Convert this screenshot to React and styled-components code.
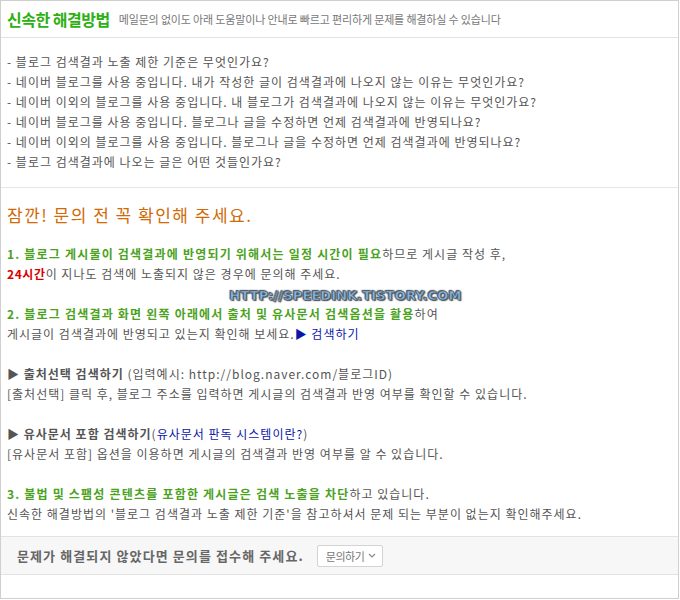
import React from 'react'
import styled, { createGlobalStyle } from 'styled-components';

const GlobalStyle = createGlobalStyle`
    body{
        margin: 0;
        background: #fff;
        font-family: "Noto Sans CJK KR", "Noto Sans", sans-serif;
    }
`;

const faqs = [
    "블로그 검색결과 노출 제한 기준은 무엇인가요?",
    "네이버 블로그를 사용 중입니다. 내가 작성한 글이 검색결과에 나오지 않는 이유는 무엇인가요?",
    "네이버 이외의 블로그를 사용 중입니다. 내 블로그가 검색결과에 나오지 않는 이유는 무엇인가요?",
    "네이버 블로그를 사용 중입니다. 블로그나 글을 수정하면 언제 검색결과에 반영되나요?",
    "네이버 이외의 블로그를 사용 중입니다. 블로그나 글을 수정하면 언제 검색결과에 반영되나요?",
    "블로그 검색결과에 나오는 글은 어떤 것들인가요?",
];

function App() {
  return (
    <>
        <GlobalStyle />
        <Page>
            <Header>
                <Title>신속한 해결방법</Title>
                <Subtitle>메일문의 없이도 아래 도움말이나 안내로 빠르고 편리하게 문제를 해결하실 수 있습니다</Subtitle>
            </Header>
            <FaqList>
                {faqs.map((q,index)=>(
                    <li key={index}>- {q}</li>
                ))}
            </FaqList>
            <Main>
                <Notice>잠깐! 문의 전 꼭 확인해 주세요.</Notice>
                <Para $tight>
                    <Green>1. 블로그 게시물이 검색결과에 반영되기 위해서는 일정 시간이 필요</Green>하므로 게시글 작성 후,<br/>
                    <Red>24시간</Red>이 지나도 검색에 노출되지 않은 경우에 문의해 주세요.
                </Para>
                <Watermark>HTTP://SPEEDINK.TISTORY.COM</Watermark>
                <Para>
                    <Green>2. 블로그 검색결과 화면 왼쪽 아래에서 출처 및 유사문서 검색옵션을 활용</Green>하여<br/>
                    게시글이 검색결과에 반영되고 있는지 확인해 보세요.<Link>▶ 검색하기</Link>
                </Para>
                <Para>
                    <Strong>▶ 출처선택 검색하기</Strong> (입력예시: http://blog.naver.com/블로그ID)<br/>
                    [출처선택] 클릭 후, 블로그 주소를 입력하면 게시글의 검색결과 반영 여부를 확인할 수 있습니다.
                </Para>
                <Para>
                    <Strong>▶ 유사문서 포함 검색하기</Strong>(<Link>유사문서 판독 시스템이란?</Link>)<br/>
                    [유사문서 포함] 옵션을 이용하면 게시글의 검색결과 반영 여부를 알 수 있습니다.
                </Para>
                <Para $last>
                    <Green>3. 불법 및 스팸성 콘텐츠를 포함한 게시글은 검색 노출을 차단</Green>하고 있습니다.<br/>
                    신속한 해결방법의 '블로그 검색결과 노출 제한 기준'을 참고하셔서 문제 되는 부분이 없는지 확인해주세요.
                </Para>
            </Main>
            <Footer>
                <FooterText>문제가 해결되지 않았다면 문의를 접수해 주세요.</FooterText>
                <AskButton>
                    문의하기
                    <svg width="8" height="5" viewBox="0 0 8 5">
                        <path d="M1 1l3 3 3-3" fill="none" stroke="#888" strokeWidth="1.1"/>
                    </svg>
                </AskButton>
            </Footer>
        </Page>
    </>
  )
}

const Page = styled.div`
    box-sizing: border-box;
    width: 679px;
    height: 599px;
    border: 1px solid #cfcfcf;
    display: flex;
    flex-direction: column;
    color: #555;
`;

const Header = styled.div`
    height: 36px;
    border-bottom: 1px solid #e2e2e2;
    display: flex;
    align-items: center;
    gap: 9px;
    padding-left: 6px;
`;

const Title = styled.h2`
    margin: 0;
    font-size: 16px;
    font-weight: 700;
    color: #2cb012;
    letter-spacing: -0.5px;
`;

const Subtitle = styled.span`
    font-size: 11px;
    color: #777;
    letter-spacing: -0.15px;
`;

const FaqList = styled.ul`
    list-style: none;
    margin: 0;
    padding: 14px 6px 15px;
    border-bottom: 1px solid #e6e6e6;
    font-size: 12px;
    line-height: 20px;
    letter-spacing: 1px;
    color: #555;
`;

const Main = styled.div`
    padding: 17px 6px 12px;
    font-size: 12px;
    line-height: 20px;
    letter-spacing: 1px;
    border-bottom: 1px solid #e2e2e2;
`;

const Notice = styled.h3`
    margin: 0 0 19px;
    font-size: 17px;
    line-height: 20px;
    font-weight: 400;
    letter-spacing: 1.5px;
    color: #cf6a06;
`;

const Para = styled.p`
    margin: 0 0 ${p => (p.$tight || p.$last) ? '0' : '20px'};
`;

const Green = styled.b`
    color: #4ba21d;
    letter-spacing: 1.2px;
`;

const Red = styled.b`
    color: #d90000;
    letter-spacing: 0.6px;
`;

const Strong = styled.b`
    color: #555;
`;

const Link = styled.span`
    color: #0a16a8;
`;

const Watermark = styled.div`
    height: 20px;
    text-align: center;
    padding-left: 12px;
    font-family: "DejaVu Sans", sans-serif;
    font-weight: 700;
    font-size: 13px;
    line-height: 24px;
    letter-spacing: 0.1px;
    color: #86b8e6;
    -webkit-text-stroke: 0.6px #4a5a6a;
    text-shadow: 0 0 2px #555, 1px 1px 1px #555, -1px -1px 1px #555;
`;

const Footer = styled.div`
    height: 37px;
    background: #f7f7f7;
    border-bottom: 1px solid #e2e2e2;
    display: flex;
    align-items: center;
    padding-left: 16px;
    gap: 13px;
`;

const FooterText = styled.span`
    font-size: 13px;
    font-weight: 700;
    letter-spacing: 1.1px;
    color: #666;
`;

const AskButton = styled.button`
    height: 22px;
    padding: 0 6px 0 8px;
    background: #fff;
    border: 1px solid #d3d3d3;
    border-radius: 2px;
    font-family: inherit;
    font-size: 11px;
    color: #777;
    display: flex;
    align-items: center;
    gap: 4px;
    letter-spacing: -0.5px;
`;

export default App
